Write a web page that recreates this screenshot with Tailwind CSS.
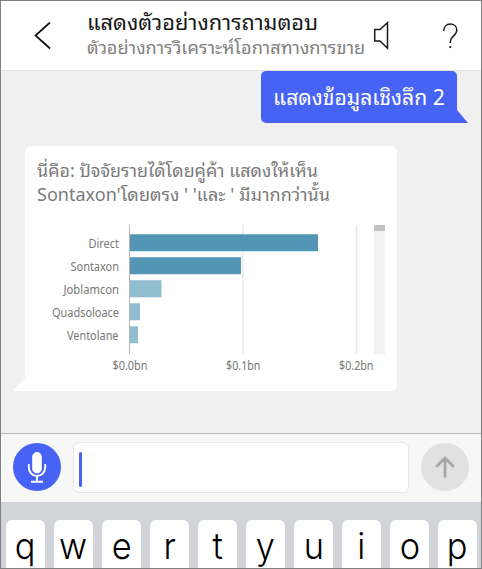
<!DOCTYPE html>
<html lang="th">
<head>
<meta charset="utf-8">
<title>Q&amp;A</title>
<script src="https://cdn.jsdelivr.net/npm/@tailwindcss/browser@4"></script>
</head>
<body class="w-[482px] h-[569px] overflow-hidden font-['Noto_Sans','Leelawadee_UI','Noto_Sans_Thai_Looped','Loma','Garuda','Waree','Noto_Sans_Thai',sans-serif]">
<div class="w-[482px] h-[569px] border border-[#808080] bg-[#f0f0f0] flex flex-col overflow-hidden">
  <header class="h-[70px] shrink-0 bg-white border-b border-[#e2e2e2] flex">
    <svg class="w-[86px] h-[69px] shrink-0" viewBox="1 1 86 69" fill="none" stroke="#111" stroke-width="1.7"><path d="M50 22.5 35.5 35.5 50 48.5"/></svg>
    <div class="w-[280px] shrink-0 pt-[7px] whitespace-nowrap">
      <h1 class="h-[28px] leading-[28px] text-[21px] text-[#161616]"><span class="inline-block origin-left scale-x-[1.038]">แสดงตัวอย่างการถามตอบ</span></h1>
      <p class="h-[24px] leading-[24px] text-[17px] text-[#808080]"><span class="inline-block origin-left scale-x-[1.065]">ตัวอย่างการวิเคราะห์โอกาสทางการขาย</span></p>
    </div>
    <svg class="w-[113px] h-[69px] shrink-0" viewBox="367 1 113 69" fill="none" stroke="#1a1a1a" stroke-width="1.5"><path d="M374.700 29.500h5.300l7.500-6.800v25.600l-7.500-7.300h-5.300z"/><path d="M443.800 31c0-4.200 2.700-6.900 6.500-6.900s6.500 2.500 6.500 6c0 6-6.500 6-6.500 11.300v1.600"/><circle cx="450.300" cy="47.100" r="1.100" fill="#1a1a1a" stroke="none"/></svg>
  </header>
  <main class="h-[362px] shrink-0">
    <div class="flex justify-end pr-[13px] h-[52px]">
      <div class="w-[196px] h-[52px] rounded-[5px] rounded-br-none bg-[#4763f6] text-white text-[21px] leading-[53px] pl-[12px] whitespace-nowrap"><span class="inline-block origin-left scale-x-[1.005]">แสดงข้อมูลเชิงลึก 2</span></div>
      <svg class="w-[11px] h-[13px] self-end" viewBox="0 0 11 13"><path d="M0 0 11 13H0z" fill="#4763f6"/></svg>
    </div>
    <div class="flex pl-[12px] mt-[23px] h-[245px]">
      <svg class="w-[12px] h-[13px] self-end" viewBox="0 0 12 13"><path d="M12 0 0 13h12z" fill="#fff"/></svg>
      <div class="w-[372px] h-[245px] rounded-[6px] rounded-bl-none bg-white">
        <div class="h-[79px] pt-[12px] pl-[12px] text-[17.5px] leading-[24px] text-[#7a7a7a] whitespace-nowrap">
          <div class="h-[24px]"><span class="inline-block origin-left scale-x-[1.02]">นี่คือ: ปัจจัยรายได้โดยคู่ค้า แสดงให้เห็น</span></div>
          <div class="h-[24px]"><span class="inline-block origin-left scale-x-[1.03]">Sontaxon'โดยตรง ' 'และ ' มีมากกว่านั้น</span></div>
        </div>
        <svg class="w-[372px] h-[166px] font-['Noto_Sans']" viewBox="25 225 372 166" font-size="12" fill="#777">
          <path d="M243 225v129M356.500 225v129" stroke="#eaeaea" stroke-width="1.500"/>
          <path d="M374 225h11v129h-11z" fill="#f2f2f2"/><path d="M374 225h11v6h-11z" fill="#c2c2c2"/>
          <path d="M130 234.300h188v17H130zM130 257.300h111v17H130z" fill="#5295b4"/>
          <path d="M130 280.300h31.500v17H130zM130 303.300h10v17h-10zM130 326.300h8v17h-8z" fill="#91bdd0"/>
          <path d="M129.500 225v129" stroke="#b5b5b5"/>
          <text x="88.500" y="248" textLength="30.500" lengthAdjust="spacingAndGlyphs">Direct</text>
          <text x="70.500" y="271" textLength="48.500" lengthAdjust="spacingAndGlyphs">Sontaxon</text>
          <text x="63.500" y="294" textLength="55.500" lengthAdjust="spacingAndGlyphs">Joblamcon</text>
          <text x="52" y="317" textLength="67" lengthAdjust="spacingAndGlyphs">Quadsoloace</text>
          <text x="67" y="340" textLength="51.500" lengthAdjust="spacingAndGlyphs">Ventolane</text>
          <text x="112.500" y="369.500" textLength="35" lengthAdjust="spacingAndGlyphs">$0.0bn</text>
          <text x="226" y="369.500" textLength="34.500" lengthAdjust="spacingAndGlyphs">$0.1bn</text>
          <text x="339" y="369.500" textLength="34.500" lengthAdjust="spacingAndGlyphs">$0.2bn</text>
        </svg>
      </div>
    </div>
  </main>
  <div class="h-[69px] shrink-0 bg-[#f7f7f7] border-t border-[#b9b9b9] flex pl-[12px] pt-[8px]">
    <svg class="w-[48px] h-[48px] mt-[1px]" viewBox="13 443 48 48" fill="none" stroke="#fff"><circle cx="37" cy="467" r="24" fill="#4763f6" stroke="none"/><rect x="32.200" y="452" width="9.600" height="21.500" rx="4.800" fill="#fff" stroke="none"/><path d="M28.800 464v3.500a8.200 8.500 0 0 0 16.400 0V464M37 476v6M31 481.700h12" stroke-width="1.900"/></svg>
    <div class="w-[336px] h-[51px] ml-[12px] rounded-[6px] border border-[#e7e7e7] bg-white pl-[5px] pt-[9px]"><div class="w-[3px] h-[35px] rounded-full bg-[#4763f6]"></div></div>
    <svg class="w-[48px] h-[48px] mt-[1px] ml-[12px]" viewBox="421 443 48 48" fill="none"><circle cx="445" cy="467" r="24" fill="#e1e1e1"/><path d="M445 476.500v-18M437 466l8-8 8 8" stroke="#a6a6a6" stroke-width="2.800" stroke-linecap="round"/></svg>
  </div>
  <div class="grow bg-[#d1d4d9] flex gap-[9px] pl-[5px] pt-[18px] font-['Inter'] text-[37px] font-light leading-[51px] text-black text-center">
    <div class="w-[39px] h-[60px] shrink-0 rounded-[6px] bg-white"><span class="inline-block scale-x-[0.93]">q</span></div>
    <div class="w-[39px] h-[60px] shrink-0 rounded-[6px] bg-white"><span class="inline-block scale-x-[0.93]">w</span></div>
    <div class="w-[39px] h-[60px] shrink-0 rounded-[6px] bg-white"><span class="inline-block scale-x-[0.93]">e</span></div>
    <div class="w-[39px] h-[60px] shrink-0 rounded-[6px] bg-white"><span class="inline-block scale-x-[0.93]">r</span></div>
    <div class="w-[39px] h-[60px] shrink-0 rounded-[6px] bg-white"><span class="inline-block scale-x-[0.93]">t</span></div>
    <div class="w-[39px] h-[60px] shrink-0 rounded-[6px] bg-white"><span class="inline-block scale-x-[0.93]">y</span></div>
    <div class="w-[39px] h-[60px] shrink-0 rounded-[6px] bg-white"><span class="inline-block scale-x-[0.93]">u</span></div>
    <div class="w-[39px] h-[60px] shrink-0 rounded-[6px] bg-white"><span class="inline-block scale-x-[0.93]">i</span></div>
    <div class="w-[39px] h-[60px] shrink-0 rounded-[6px] bg-white"><span class="inline-block scale-x-[0.93]">o</span></div>
    <div class="w-[39px] h-[60px] shrink-0 rounded-[6px] bg-white"><span class="inline-block scale-x-[0.93]">p</span></div>
  </div>
</div>
</body>
</html>
